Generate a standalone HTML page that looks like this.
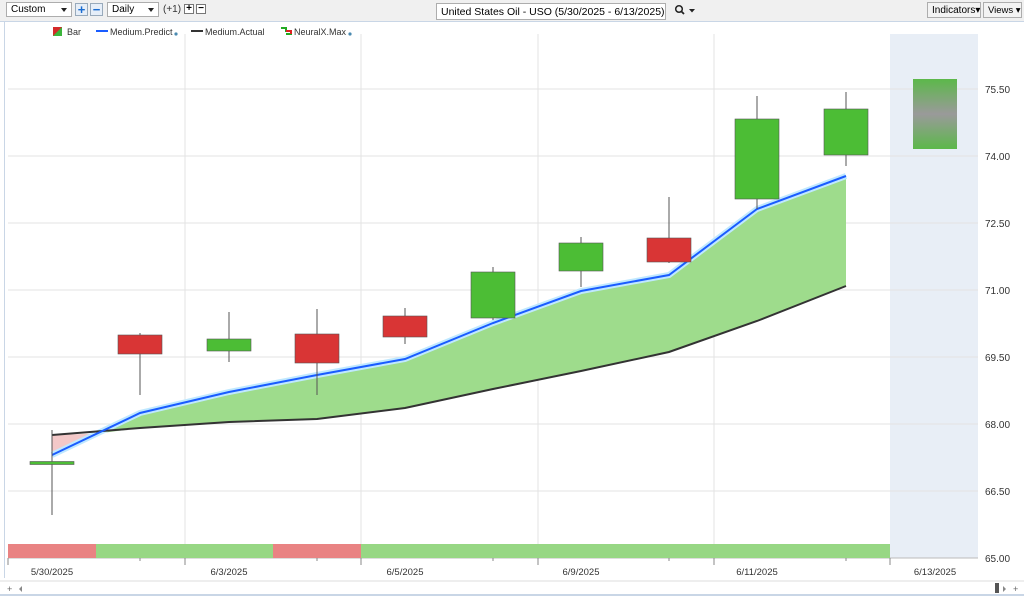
<!DOCTYPE html>
<html><head><meta charset="utf-8"><style>
body{margin:0;width:1024px;height:596px;overflow:hidden;background:#fff;font-family:"Liberation Sans",sans-serif;}
*{white-space:nowrap;}
.tb{position:absolute;left:0;top:0;width:1024px;height:21px;background:#f0f0f0;border-bottom:1px solid #c9d6e6;}
.dd{position:absolute;top:2px;height:15px;border:1px solid #adadad;background:#fff;font-size:10px;line-height:14px;padding-left:4px;box-sizing:border-box;overflow:hidden;}
.dd i{position:absolute;right:4px;top:5px;border:3px solid transparent;border-top:4px solid #222;}
.bt{position:absolute;top:3px;width:13px;height:13px;border:1px solid #9ab;background:#e6eef8;color:#1a6cd0;font-size:13px;line-height:12px;text-align:center;font-weight:bold;box-sizing:border-box;}
.sb{position:absolute;top:4px;width:10px;height:10px;border:1px solid #777;background:#fff;font-size:10px;line-height:8px;text-align:center;font-weight:bold;box-sizing:border-box;}
.rb{position:absolute;top:2px;height:16px;border:1px solid #adadad;background:#f3f3f3;font-size:10px;line-height:15px;padding-left:4px;box-sizing:border-box;overflow:hidden;}
</style></head><body>
<div class="tb">
<div class="dd" style="left:6px;width:66px">Custom<i></i></div>
<div class="bt" style="left:75px">+</div><div class="bt" style="left:90px">−</div>
<div class="dd" style="left:107px;width:52px">Daily<i></i></div>
<div style="position:absolute;left:163px;top:4px;font-size:10px;color:#333">(+1)</div>
<div class="sb" style="left:184px">+</div><div class="sb" style="left:196px">−</div>
<div class="dd" style="left:436px;width:230px;font-size:10.5px;height:17px;top:3px;line-height:16px">United States Oil - USO (5/30/2025 - 6/13/2025)</div>
<svg style="position:absolute;left:674px;top:4px" width="22" height="12"><circle cx="5" cy="5" r="3.3" fill="none" stroke="#222" stroke-width="1.5"/><line x1="7.5" y1="7.5" x2="10" y2="10" stroke="#222" stroke-width="1.8"/><path d="M15 5h6l-3 3.5z" fill="#222"/></svg>
<div class="rb" style="left:927px;width:54px">Indicators▾</div>
<div class="rb" style="left:983px;width:39px;font-size:9.5px">Views ▾</div>
</div>
<div style="position:absolute;left:4px;top:22px;width:1px;height:556px;background:#c9d6e6"></div>
<svg style="position:absolute;left:0;top:22px" width="1024" height="574" viewBox="0 22 1024 574">
<rect x="890" y="34" width="88" height="524" fill="#e8eef6"/>
<g stroke="#e3e3e3" stroke-width="1">
<line x1="8" y1="89" x2="978" y2="89"/><line x1="8" y1="156" x2="978" y2="156"/><line x1="8" y1="223" x2="978" y2="223"/><line x1="8" y1="290" x2="978" y2="290"/><line x1="8" y1="357" x2="978" y2="357"/><line x1="8" y1="424" x2="978" y2="424"/><line x1="8" y1="491" x2="978" y2="491"/>
<line x1="185" y1="34" x2="185" y2="558"/><line x1="361" y1="34" x2="361" y2="558"/><line x1="538" y1="34" x2="538" y2="558"/><line x1="714" y1="34" x2="714" y2="558"/>
</g>
<line x1="8" y1="558" x2="978" y2="558" stroke="#bbb"/>
<rect x="53" y="27" width="9" height="9" fill="#d42a2a"/><path d="M53 36L62 27V36z" fill="#3bb53b"/>
<text x="67" y="35" font-size="9" fill="#333">Bar</text>
<line x1="96" y1="31" x2="108" y2="31" stroke="#1a5cff" stroke-width="2"/><text x="110" y="35" font-size="9" fill="#333">Medium.Predict</text><circle cx="176" cy="34" r="1.6" fill="#4a8ab0"/>
<line x1="191" y1="31" x2="203" y2="31" stroke="#333" stroke-width="2"/><text x="205" y="35" font-size="9" fill="#333">Medium.Actual</text>
<path d="M281 28h5v3h5v3h-5" fill="none" stroke="#2a2" stroke-width="2"/><path d="M286 31h5v3" stroke="#d22" stroke-width="2" fill="none"/>
<text x="294" y="35" font-size="9" fill="#333">NeuralX.Max</text><circle cx="350" cy="34" r="1.6" fill="#4a8ab0"/>
<path d="M52 455L98 433.5L52 435z" fill="#f3c8c8" stroke="none"/>
<path d="M98 433.5L140 413L229 392L317 375L405 359L493 323L581 291L669 275L757 209L846 176L846 286L757 321L669 352L581 371L493 389L405 408L317 419L229 422L140 428z" fill="#9edc8c"/>
<polyline points="52,455 140,413 229,392 317,375 405,359 493,323 581,291 669,275 757,209 846,176" fill="none" stroke="#bfe8ff" stroke-width="6"/>
<polyline points="52,435 140,428 229,422 317,419 405,408 493,389 581,371 669,352 757,321 846,286" fill="none" stroke="#333" stroke-width="2"/>
<polyline points="52,455 140,413 229,392 317,375 405,359 493,323 581,291 669,275 757,209 846,176" fill="none" stroke="#1a5cff" stroke-width="2"/>
<g stroke="#555" stroke-width="1">
<line x1="52" y1="430" x2="52" y2="515"/><line x1="140" y1="333" x2="140" y2="395"/><line x1="229" y1="312" x2="229" y2="362"/><line x1="317" y1="309" x2="317" y2="395"/><line x1="405" y1="308" x2="405" y2="344"/><line x1="493" y1="267" x2="493" y2="320"/><line x1="581" y1="237" x2="581" y2="287"/><line x1="669" y1="197" x2="669" y2="263"/><line x1="757" y1="96" x2="757" y2="209"/><line x1="846" y1="92" x2="846" y2="166"/>
</g>
<g stroke="#555" stroke-width="0.6">
<rect x="30" y="461.5" width="44" height="3" fill="#4cbd35"/>
<rect x="118" y="335" width="44" height="19" fill="#d93535"/>
<rect x="207" y="339" width="44" height="12" fill="#4cbd35"/>
<rect x="295" y="334" width="44" height="29" fill="#d93535"/>
<rect x="383" y="316" width="44" height="21" fill="#d93535"/>
<rect x="471" y="272" width="44" height="46" fill="#4cbd35"/>
<rect x="559" y="243" width="44" height="28" fill="#4cbd35"/>
<rect x="647" y="238" width="44" height="24" fill="#d93535"/>
<rect x="735" y="119" width="44" height="80" fill="#4cbd35"/>
<rect x="824" y="109" width="44" height="46" fill="#4cbd35"/>
</g>
<defs><linearGradient id="g" x1="0" y1="0" x2="0" y2="1"><stop offset="0" stop-color="#5cb84a"/><stop offset="0.5" stop-color="#9a9a9a"/><stop offset="1" stop-color="#5cb84a"/></linearGradient></defs>
<rect x="913" y="79" width="44" height="70" fill="url(#g)"/>
<rect x="8" y="544" width="88" height="14" fill="#e98383"/><rect x="96" y="544" width="177" height="14" fill="#97d784"/><rect x="273" y="544" width="88" height="14" fill="#e98383"/><rect x="361" y="544" width="529" height="14" fill="#97d784"/>
<g stroke="#888"><line x1="8" y1="558" x2="8" y2="565"/><line x1="185" y1="558" x2="185" y2="565"/><line x1="361" y1="558" x2="361" y2="565"/><line x1="538" y1="558" x2="538" y2="565"/><line x1="714" y1="558" x2="714" y2="565"/><line x1="890" y1="558" x2="890" y2="565"/>
<line x1="140" y1="558" x2="140" y2="561"/><line x1="317" y1="558" x2="317" y2="561"/><line x1="493" y1="558" x2="493" y2="561"/><line x1="669" y1="558" x2="669" y2="561"/><line x1="846" y1="558" x2="846" y2="561"/></g>
<g font-size="9.5" fill="#333" text-anchor="middle">
<text x="52" y="575">5/30/2025</text><text x="229" y="575">6/3/2025</text><text x="405" y="575">6/5/2025</text><text x="581" y="575">6/9/2025</text><text x="757" y="575">6/11/2025</text><text x="935" y="575">6/13/2025</text>
</g>
<g font-size="10" fill="#333">
<text x="985" y="93">75.50</text><text x="985" y="160">74.00</text><text x="985" y="227">72.50</text><text x="985" y="294">71.00</text><text x="985" y="361">69.50</text><text x="985" y="428">68.00</text><text x="985" y="495">66.50</text><text x="985" y="562">65.00</text>
</g>
<line x1="0" y1="581" x2="1024" y2="581" stroke="#ddd"/>
<text x="7" y="592" font-size="9" fill="#666">+</text><path d="M22 586l-3 3 3 3z" fill="#888"/>
<rect x="995" y="583" width="4" height="10" fill="#555"/><path d="M1003 586l3 3-3 3z" fill="#888"/><text x="1013" y="592" font-size="9" fill="#666">+</text>
<line x1="0" y1="595" x2="1024" y2="595" stroke="#c9d6e6" stroke-width="2"/>
</svg>
</body></html>
